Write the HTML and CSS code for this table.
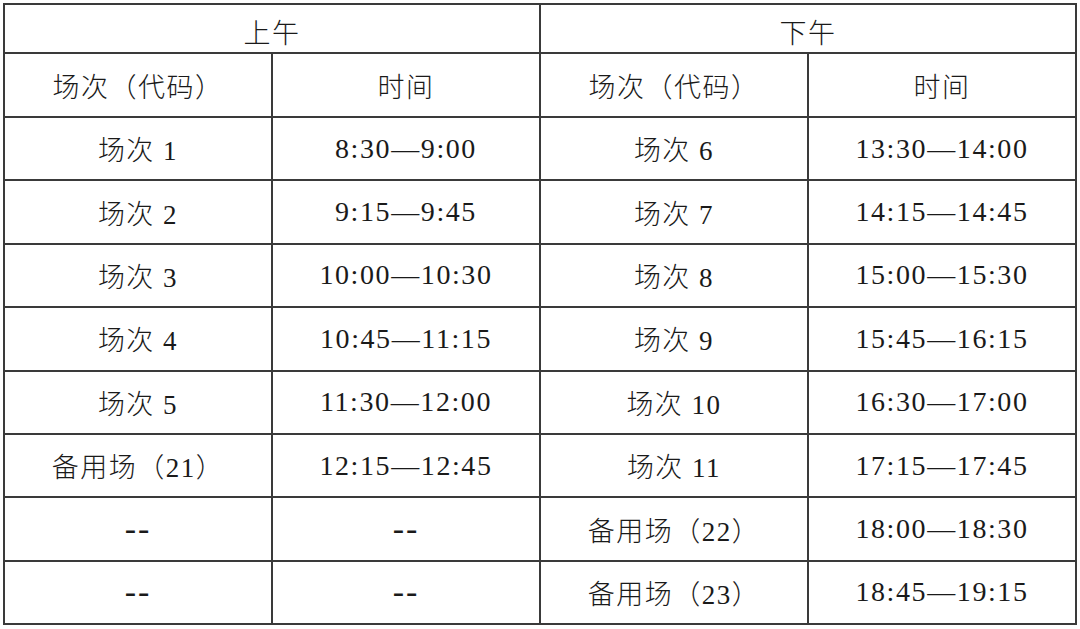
FILE: index.html
```html
<!DOCTYPE html>
<html lang="zh">
<head>
<meta charset="utf-8">
<link rel="stylesheet" href="styles.css">
</head>
<body>
<div class="wrap">
<table class="sched">
  <colgroup><col><col><col><col></colgroup>
  <tr class="r-top"><td colspan="2">上午</td><td colspan="2">下午</td></tr>
  <tr class="r-head"><td>场次（代码）</td><td>时间</td><td>场次（代码）</td><td>时间</td></tr>
  <tr class="r"><td>场次 1</td><td class="t">8:30—9:00</td><td>场次 6</td><td class="t">13:30—14:00</td></tr>
  <tr class="r"><td>场次 2</td><td class="t">9:15—9:45</td><td>场次 7</td><td class="t">14:15—14:45</td></tr>
  <tr class="r"><td>场次 3</td><td class="t">10:00—10:30</td><td>场次 8</td><td class="t">15:00—15:30</td></tr>
  <tr class="r"><td>场次 4</td><td class="t">10:45—11:15</td><td>场次 9</td><td class="t">15:45—16:15</td></tr>
  <tr class="r"><td>场次 5</td><td class="t">11:30—12:00</td><td>场次 10</td><td class="t">16:30—17:00</td></tr>
  <tr class="r"><td>备用场（21）</td><td class="t">12:15—12:45</td><td>场次 11</td><td class="t">17:15—17:45</td></tr>
  <tr class="r"><td class="d">--</td><td class="d">--</td><td>备用场（22）</td><td class="t">18:00—18:30</td></tr>
  <tr class="r"><td class="d">--</td><td class="d">--</td><td>备用场（23）</td><td class="t">18:45—19:15</td></tr>
</table>
</div>
</body>
</html>
```

FILE: styles.css
```css
html, body {
  margin: 0;
  padding: 0;
  background: #ffffff;
}
.wrap {
  padding: 3px 3px 0 3px;
}
.sched {
  width: 1074px;
  table-layout: fixed;
  border-collapse: separate;
  border-spacing: 0;
  border-top: 2px solid #3a3a3a;
  border-left: 2px solid #3a3a3a;
  font-family: "Liberation Serif", "Noto Sans CJK SC", serif;
  font-weight: 300;
  font-size: 27px;
  color: #1a1a1a;
}
.sched td {
  border-right: 2px solid #3a3a3a;
  border-bottom: 2px solid #3a3a3a;
  text-align: center;
  vertical-align: middle;
  padding: 0;
  letter-spacing: 1.5px;
}
.sched td.t {
  font-size: 28px;
  letter-spacing: 1.6px;
}
.sched td.d {
  font-size: 34px;
  letter-spacing: 2px;
}
.r-top { height: 49px; }
.r-top td { padding-top: 6px; }
.r-head { height: 64px; }
.r { height: 63.4px; }
```
